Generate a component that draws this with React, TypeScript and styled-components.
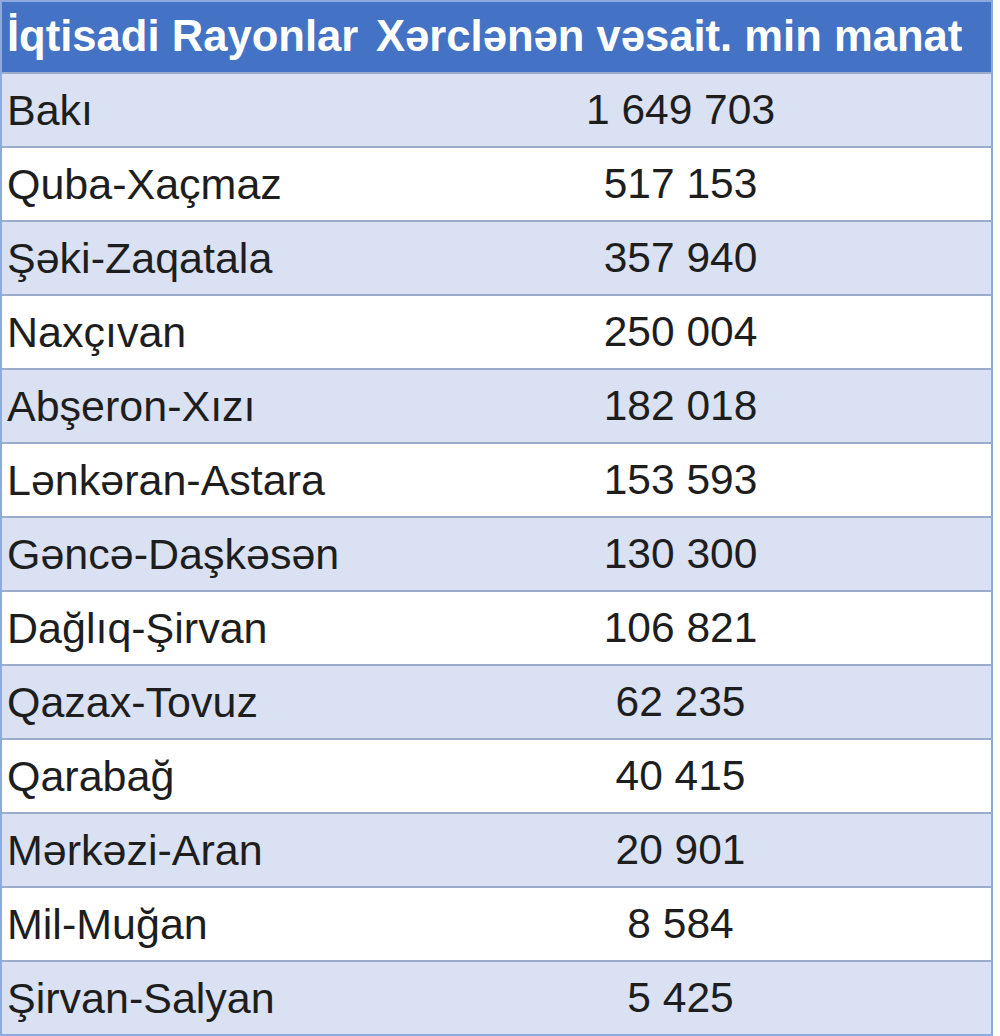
import React from 'react'
import styled, { createGlobalStyle } from 'styled-components'

const GlobalStyle = createGlobalStyle`
  html, body {
    margin: 0;
    padding: 0;
    background: #ffffff;
  }
  body {
    font-family: 'Liberation Sans', Arial, sans-serif;
  }
`

const Table = styled.div`
  width: 993px;
  box-sizing: border-box;
  border-left: 2px solid #8ea9db;
  border-right: 2px solid #8ea9db;
  border-bottom: 2px solid #8ea9db;
  display: flex;
  flex-direction: column;
`

const HeaderRow = styled.div`
  display: grid;
  grid-template-columns: 366px 1fr;
  height: 72px;
  box-sizing: border-box;
  border-top: 2px solid #8ea9db;
  background: #4472c4;
  color: #ffffff;
  font-weight: bold;
  font-size: 43.6px;
  align-items: center;
`

const HeaderCell = styled.div<{ $pad: number }>`
  padding-left: ${(p) => p.$pad}px;
  white-space: nowrap;
  line-height: 1;
`

const Row = styled.div<{ $striped: boolean }>`
  display: grid;
  grid-template-columns: 368px 1fr;
  height: 74px;
  box-sizing: border-box;
  border-top: 2px solid #9daccb;
  background: ${(p) => (p.$striped ? '#d9e1f2' : '#ffffff')};
  color: #1e1e1e;
  font-size: 43px;
  align-items: center;
`

const NameCell = styled.div`
  padding-left: 5px;
  white-space: nowrap;
  line-height: 1;
`

const ValueCell = styled.div`
  text-align: center;
  font-size: 42.5px;
  white-space: nowrap;
  line-height: 1;
`

const rows: [string, string][] = [
  ['Bakı', '1 649 703'],
  ['Quba-Xaçmaz', '517 153'],
  ['Şəki-Zaqatala', '357 940'],
  ['Naxçıvan', '250 004'],
  ['Abşeron-Xızı', '182 018'],
  ['Lənkəran-Astara', '153 593'],
  ['Gəncə-Daşkəsən', '130 300'],
  ['Dağlıq-Şirvan', '106 821'],
  ['Qazax-Tovuz', '62 235'],
  ['Qarabağ', '40 415'],
  ['Mərkəzi-Aran', '20 901'],
  ['Mil-Muğan', '8 584'],
  ['Şirvan-Salyan', '5 425'],
]

export default function App() {
  return (
    <>
      <GlobalStyle />
      <Table>
        <HeaderRow>
          <HeaderCell $pad={5}>İqtisadi Rayonlar</HeaderCell>
          <HeaderCell $pad={8}>Xərclənən vəsait. min manat</HeaderCell>
        </HeaderRow>
        {rows.map(([name, value], i) => (
          <Row key={name} $striped={i % 2 === 0}>
            <NameCell>{name}</NameCell>
            <ValueCell>{value}</ValueCell>
          </Row>
        ))}
      </Table>
    </>
  )
}
